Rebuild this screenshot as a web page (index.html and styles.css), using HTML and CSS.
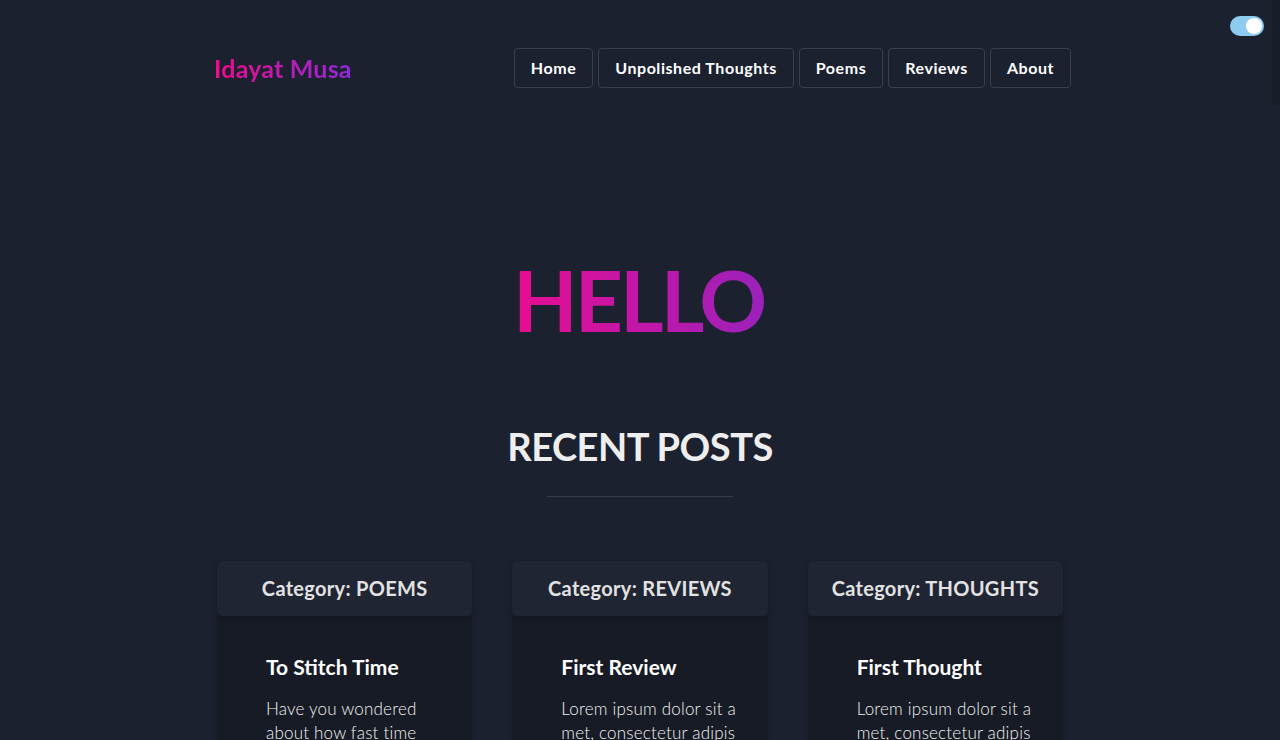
FILE: index.html
```html
<!DOCTYPE html>
<html>
<head>
<meta charset="utf-8">
<link rel="stylesheet" href="styles.css">
</head>
<body>
<div class="edge"></div>
<label class="toggle"><span class="knob"></span></label>
<header class="top">
  <a class="logo">Idayat Musa</a>
  <nav class="nav">
    <a class="navbtn">Home</a>
    <a class="navbtn">Unpolished Thoughts</a>
    <a class="navbtn">Poems</a>
    <a class="navbtn">Reviews</a>
    <a class="navbtn">About</a>
  </nav>
</header>
<main>
  <div class="hero"><h1 class="hello">HELLO</h1></div>
  <h2 class="recent">RECENT POSTS</h2>
  <hr class="rule">
  <section class="cards">
    <article class="card">
      <div class="cat">Category: POEMS</div>
      <div class="body">
        <h3>To Stitch Time</h3>
        <p>Have you wondered about how fast time flies</p>
      </div>
    </article>
    <article class="card">
      <div class="cat">Category: REVIEWS</div>
      <div class="body">
        <h3>First Review</h3>
        <p>Lorem ipsum dolor sit a met, consectetur adipis icing elit</p>
      </div>
    </article>
    <article class="card">
      <div class="cat">Category: THOUGHTS</div>
      <div class="body">
        <h3>First Thought</h3>
        <p>Lorem ipsum dolor sit a met, consectetur adipis icing elit</p>
      </div>
    </article>
  </section>
</main>
</body>
</html>
```
FILE: styles.css
```css
html, body {
  margin: 0;
  padding: 0;
  background: #1c2130;
  font-family: "Lato", "Open Sans", sans-serif;
  color: #eeeeee;
  overflow: hidden;
  height: 740px;
}
.edge {
  position: absolute;
  right: 0;
  top: 0;
  width: 8px;
  height: 105px;
  background: #191d29;
}
.toggle {
  position: absolute;
  left: 1230px;
  top: 16px;
  width: 34px;
  height: 20px;
  border-radius: 10px;
  background: #8ecbf1;
}
.knob {
  position: absolute;
  right: 2px;
  top: 2px;
  width: 16px;
  height: 16px;
  border-radius: 50%;
  background: #ffffff;
}
.top {
  width: 857px;
  margin-left: calc(50% - 426px);
  padding-top: 48px;
  display: flex;
  justify-content: space-between;
  align-items: center;
}
.logo {
  font-size: 25px;
  font-weight: 700;
  background: linear-gradient(90deg, #f20a8a, #8c2bd8);
  -webkit-background-clip: text;
  background-clip: text;
  color: transparent;
  letter-spacing: 0.2px;
}
.nav {
  display: flex;
  gap: 5px;
}
.navbtn {
  height: 38px;
  line-height: 38px;
  padding: 0 16px;
  border: 1px solid #3a3f4b;
  border-radius: 4px;
  font-size: 16px;
  font-weight: 700;
  color: #ffffff;
  letter-spacing: 0.55px;
}
main {
  width: 846px;
  margin: 0 auto;
}
.hero {
  margin-top: 168px;
  text-align: center;
}
.hello {
  display: inline-block;
  margin: 0;
  font-size: 84px;
  line-height: 88px;
  font-weight: 700;
  letter-spacing: -3px;
  padding-right: 3px;
  background: linear-gradient(90deg, #e70d90 0%, #c217a8 50%, #9a22bb 100%);
  -webkit-background-clip: text;
  background-clip: text;
  color: transparent;
}
.recent {
  margin: 80px 0 0;
  text-align: center;
  font-size: 38px;
  line-height: 44px;
  font-weight: 700;
  letter-spacing: -0.5px;
  color: #eeeeee;
}
.rule {
  width: 186px;
  margin: 28px auto 0;
  border: 0;
  border-top: 1px solid #373c49;
}
.cards {
  margin-top: 64px;
  display: grid;
  grid-template-columns: repeat(3, 1fr);
  gap: 40px;
}
.card {
  display: flex;
  flex-direction: column;
}
.cat {
  height: 55px;
  line-height: 55px;
  text-align: center;
  background: #1f2533;
  border-radius: 6px;
  font-size: 20px;
  font-weight: 700;
  letter-spacing: 0.3px;
  color: #e2e2e2;
  box-shadow: 0 2px 6px rgba(0,0,0,0.25);
  position: relative;
  z-index: 1;
}
.body {
  background: #171b25;
  padding: 38px 26px 40px 49px;
  box-shadow: 0 0 8px rgba(0,0,0,0.15);
}
.body h3 {
  margin: 0;
  font-size: 21px;
  font-weight: 700;
  color: #ffffff;
}
.body p {
  margin: 18px 0 0;
  font-size: 17px;
  line-height: 24px;
  font-weight: 300;
  letter-spacing: 0.2px;
  color: #f2f2f2;
}
```
